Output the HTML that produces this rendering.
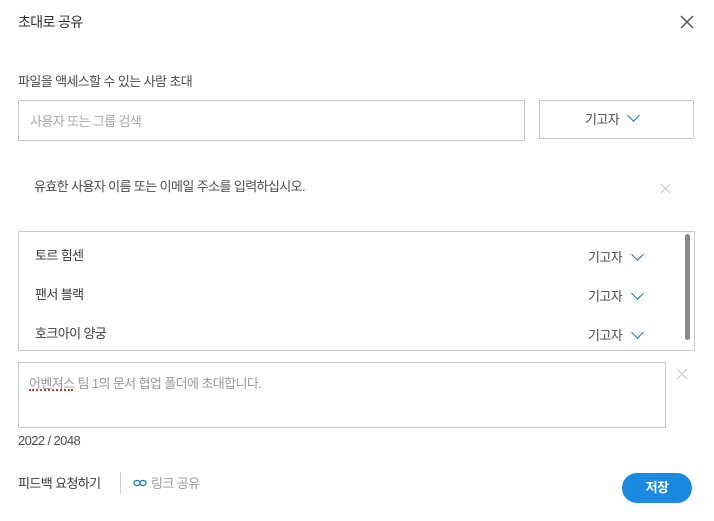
<!DOCTYPE html>
<html><head><meta charset="utf-8"><style>
body{margin:0;width:714px;height:521px;background:#fff;font-family:"Liberation Sans","Noto Sans CJK KR",sans-serif;color:#323232;position:relative;overflow:hidden;letter-spacing:-0.6px}
.a{position:absolute;white-space:nowrap}
.chev{position:absolute;width:8px;height:8px;border-right:1.5px solid #1473b8;border-bottom:1.5px solid #1473b8;transform:rotate(45deg)}
.x{position:absolute}
</style></head><body>
<div class="a" style="left:18px;top:12px;font-size:14px;color:#2c2c2c">초대로 공유</div>
<svg class="x" style="left:680px;top:15px" width="14" height="14"><path d="M1 1L13 13M13 1L1 13" stroke="#555" stroke-width="1.5"/></svg>
<div class="a" style="left:18px;top:71px;font-size:13px;color:#4b4b4b">파일을 액세스할 수 있는 사람 초대</div>
<div class="a" style="left:18px;top:100px;width:505px;height:39px;border:1px solid #cacaca"></div>
<div class="a" style="left:30px;top:111px;font-size:13px;color:#a8a8a8">사용자 또는 그룹 검색</div>
<div class="a" style="left:539px;top:100px;width:153px;height:37px;border:1px solid #cacaca"></div>
<div class="a" style="left:585px;top:109px;font-size:13px;color:#4b4b4b">기고자</div>
<div class="chev" style="left:629px;top:111px"></div>
<div class="a" style="left:34px;top:176px;font-size:13px;color:#4b4b4b">유효한 사용자 이름 또는 이메일 주소를 입력하십시오.</div>
<svg class="x" style="left:660px;top:183px" width="11" height="11"><path d="M1 1L10 10M10 1L1 10" stroke="#ccc" stroke-width="1.2"/></svg>
<div class="a" style="left:18px;top:231px;width:675px;height:118px;border:1px solid #cacaca"></div>
<div class="a" style="left:685px;top:234px;width:5px;height:106px;background:#8a8a8a;border-radius:3px"></div>
<div class="a" style="left:35px;top:245px;font-size:13px;color:#3a3a3a">토르 힘센</div>
<div class="a" style="left:35px;top:284px;font-size:13px;color:#3a3a3a">팬서 블랙</div>
<div class="a" style="left:35px;top:323px;font-size:13px;color:#3a3a3a">호크아이 양궁</div>
<div class="a" style="left:588px;top:247px;font-size:13px;color:#4b4b4b">기고자</div>
<div class="a" style="left:588px;top:286px;font-size:13px;color:#4b4b4b">기고자</div>
<div class="a" style="left:588px;top:325px;font-size:13px;color:#4b4b4b">기고자</div>
<div class="chev" style="left:633px;top:250px"></div>
<div class="chev" style="left:633px;top:289px"></div>
<div class="chev" style="left:633px;top:328px"></div>
<div class="a" style="left:18px;top:362px;width:646px;height:64px;border:1px solid #cacaca"></div>
<div class="a" style="left:29px;top:373px;font-size:13px;color:#9a9a9a">어벤져스 팀 1의 문서 협업 폴더에 초대합니다.</div>
<div class="a" style="left:29px;top:389px;width:44px;border-bottom:2px dotted #e03030"></div>
<svg class="x" style="left:676px;top:368px" width="12" height="12"><path d="M1 1L11 11M11 1L1 11" stroke="#ccc" stroke-width="1.2"/></svg>
<div class="a" style="left:18px;top:433px;font-size:13px;color:#4b4b4b">2022 / 2048</div>
<div class="a" style="left:18px;top:473px;font-size:13px;color:#3a3a3a">피드백 요청하기</div>
<div class="a" style="left:120px;top:472px;width:1px;height:22px;background:#d0d0d0"></div>
<svg class="x" style="left:133px;top:479px" width="14" height="9"><rect x="1" y="1.5" width="6" height="5" rx="2.5" fill="none" stroke="#1473b8" stroke-width="1.2"/><rect x="7" y="1.5" width="6" height="5" rx="2.5" fill="none" stroke="#1473b8" stroke-width="1.2"/></svg>
<div class="a" style="left:151px;top:473px;font-size:13px;color:#9a9a9a">링크 공유</div>
<div class="a" style="left:622px;top:473px;width:70px;height:30px;border-radius:16px;background:#1a8ae0;color:#fff;font-size:13px;font-weight:bold;text-align:center;line-height:30px">저장</div>
</body></html>
